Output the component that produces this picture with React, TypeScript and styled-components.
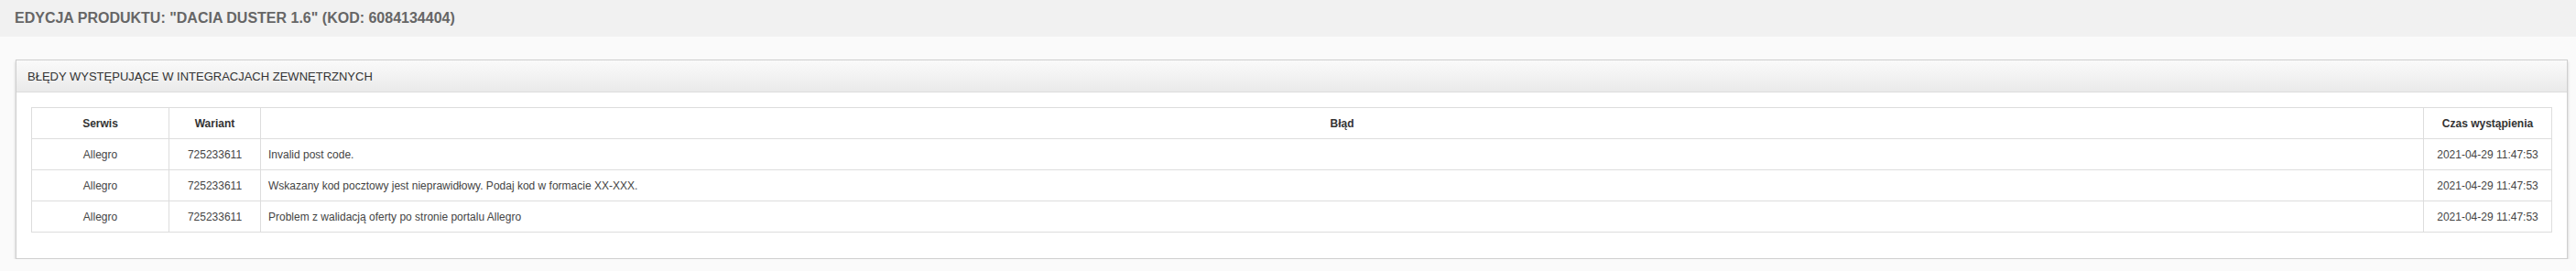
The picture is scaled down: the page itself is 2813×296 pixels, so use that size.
import React from "react";
import styled, { createGlobalStyle } from "styled-components";

const GlobalStyle = createGlobalStyle`
  body {
    margin: 0;
    background: #fafafa;
    font-family: "Liberation Sans", Arial, sans-serif;
  }
`;

const TopBar = styled.div`
  height: 40px;
  background: #f1f1f1;
  padding-left: 16px;
  display: flex;
  align-items: center;
`;

const Title = styled.h1`
  margin: 0;
  font-size: 16px;
  font-weight: bold;
  color: #666;
  text-transform: uppercase;
`;

const Content = styled.div`
  padding: 25px 9px 0 17px;
`;

const Panel = styled.div`
  background: #fff;
  border: 1px solid #cfcfcf;
  box-shadow: 0 2px 3px rgba(0, 0, 0, 0.2);
`;

const PanelHeader = styled.div`
  height: 34px;
  border-bottom: 1px solid #dcdcdc;
  background: linear-gradient(to bottom, #fafafa, #eaeaea);
  padding-left: 12px;
  display: flex;
  align-items: center;
  font-family: "Liberation Sans Narrow", "Liberation Sans", Arial, sans-serif;
  font-stretch: condensed;
  font-size: 13px;
  color: #333;
  text-transform: uppercase;
`;

const PanelBody = styled.div`
  padding: 16px 16px 28px;
`;

const Table = styled.table`
  width: 100%;
  border-collapse: collapse;
  font-size: 12px;
  color: #444;
`;

const HeadCell = styled.th`
  height: 33px;
  border: 1px solid #ddd;
  font-weight: bold;
  color: #333;
  text-align: center;
  padding: 0 8px;
`;

const Cell = styled.td<{ $align?: "left" | "center" }>`
  height: 33px;
  border: 1px solid #ddd;
  text-align: ${(p) => p.$align ?? "center"};
  padding: 0 8px;
`;

const errors = [
  { service: "Allegro", variant: "725233611", message: "Invalid post code.", time: "2021-04-29 11:47:53" },
  {
    service: "Allegro",
    variant: "725233611",
    message: "Wskazany kod pocztowy jest nieprawidłowy. Podaj kod w formacie XX-XXX.",
    time: "2021-04-29 11:47:53",
  },
  {
    service: "Allegro",
    variant: "725233611",
    message: "Problem z walidacją oferty po stronie portalu Allegro",
    time: "2021-04-29 11:47:53",
  },
];

export default function App() {
  return (
    <>
      <GlobalStyle />
      <TopBar>
        <Title>Edycja produktu: "Dacia Duster 1.6" (KOD: 6084134404)</Title>
      </TopBar>
      <Content>
        <Panel>
          <PanelHeader>Błędy występujące w integracjach zewnętrznych</PanelHeader>
          <PanelBody>
            <Table>
              <colgroup>
                <col style={{ width: 150 }} />
                <col style={{ width: 100 }} />
                <col />
                <col style={{ width: 140 }} />
              </colgroup>
              <thead>
                <tr>
                  <HeadCell>Serwis</HeadCell>
                  <HeadCell>Wariant</HeadCell>
                  <HeadCell>Błąd</HeadCell>
                  <HeadCell>Czas wystąpienia</HeadCell>
                </tr>
              </thead>
              <tbody>
                {errors.map((e, i) => (
                  <tr key={i}>
                    <Cell>{e.service}</Cell>
                    <Cell>{e.variant}</Cell>
                    <Cell $align="left">{e.message}</Cell>
                    <Cell>{e.time}</Cell>
                  </tr>
                ))}
              </tbody>
            </Table>
          </PanelBody>
        </Panel>
      </Content>
    </>
  );
}
